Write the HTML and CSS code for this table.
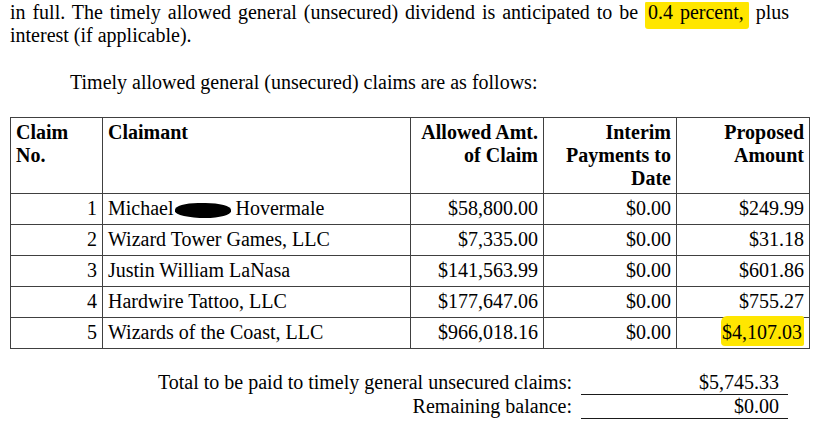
FILE: index.html
```html
<!DOCTYPE html>
<html>
<head>
<meta charset="utf-8">
<link rel="stylesheet" href="styles.css">
</head>
<body>
<div class="page">
  <p class="lead">in full. The timely allowed general (unsecured) dividend is anticipated to be <span class="hl">0.4 percent,</span> plus interest (if applicable).</p>
  <p class="intro">Timely allowed general (unsecured) claims are as follows:</p>
  <table class="claims">
    <colgroup>
      <col class="c-no"><col class="c-name"><col class="c-amt"><col class="c-amt"><col class="c-amt">
    </colgroup>
    <thead>
      <tr>
        <th class="left">Claim<br>No.</th>
        <th class="left">Claimant</th>
        <th>Allowed Amt.<br>of Claim</th>
        <th>Interim<br>Payments to<br>Date</th>
        <th>Proposed<br>Amount</th>
      </tr>
    </thead>
    <tbody>
      <tr><td>1</td><td class="left">Michael<span class="redact"></span> Hovermale</td><td>$58,800.00</td><td>$0.00</td><td>$249.99</td></tr>
      <tr><td>2</td><td class="left">Wizard Tower Games, LLC</td><td>$7,335.00</td><td>$0.00</td><td>$31.18</td></tr>
      <tr><td>3</td><td class="left">Justin William LaNasa</td><td>$141,563.99</td><td>$0.00</td><td>$601.86</td></tr>
      <tr><td>4</td><td class="left">Hardwire Tattoo, LLC</td><td>$177,647.06</td><td>$0.00</td><td>$755.27</td></tr>
      <tr><td>5</td><td class="left">Wizards of the Coast, LLC</td><td>$966,018.16</td><td>$0.00</td><td><span class="hl2">$4,107.03</span></td></tr>
    </tbody>
  </table>
  <div class="totals">
    <div class="t-label">Total to be paid to timely general unsecured claims:</div>
    <div class="t-value">$5,745.33</div>
    <div class="t-label">Remaining balance:</div>
    <div class="t-value">$0.00</div>
  </div>
</div>
</body>
</html>
```
FILE: styles.css
```css
html, body {
  margin: 0;
  padding: 0;
  background: #ffffff;
}
body {
  font-family: "Liberation Serif", "Times New Roman", serif;
  font-size: 20px;
  line-height: 23px;
  color: #000;
}
.page {
  padding: 1px 0 0 10px;
}
.lead {
  margin: 0;
  width: 779px;
  text-align: justify;
}
.hl {
  background: linear-gradient(to bottom, transparent 1.5px, #ffe600 1.5px);
  padding: 0 5px 6px 3px;
  border-radius: 3px;
}
.intro {
  margin: 24px 0 0 60px;
}
.claims {
  margin-top: 23px;
  border-collapse: collapse;
  table-layout: fixed;
  width: 799px;
}
.c-no { width: 92px; }
.c-name { width: 308px; }
.c-amt { width: 133px; }
.claims th,
.claims td {
  border: 1px solid #404040;
  padding: 3px 5px 4px 5px;
  text-align: right;
  vertical-align: top;
  white-space: nowrap;
}
.claims th {
  font-weight: bold;
  padding-bottom: 3px;
}
.claims .left {
  text-align: left;
}
.redact {
  display: inline-block;
  width: 56px;
  height: 15px;
  margin-left: 1px;
  background: #000;
  border-radius: 45% 50% 50% 60% / 50% 50% 50% 50%;
  vertical-align: -3px;
}
.hl2 {
  background: #ffe600;
  padding: 5px 2px 3px 1px;
  border-radius: 6px 2px 2px 4px;
}
.totals {
  margin-top: 22px;
  display: grid;
  grid-template-columns: 562px 207px;
  column-gap: 9px;
}
.t-label {
  text-align: right;
  height: 24px;
}
.t-value {
  text-align: right;
  padding-right: 9px;
  height: 23px;
  border-bottom: 1px solid #1a1a1a;
}
```
